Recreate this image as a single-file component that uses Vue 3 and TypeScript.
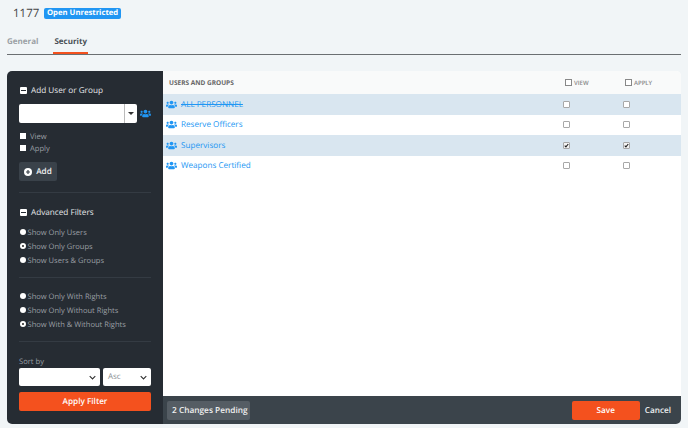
<script setup lang="ts">
interface Row { name: string; view: boolean; apply: boolean; tint: boolean; struck?: boolean }
const rows: Row[] = [
  { name: 'ALL PERSONNEL', view: false, apply: false, tint: true, struck: true },
  { name: 'Reserve Officers', view: false, apply: false, tint: false },
  { name: 'Supervisors', view: true, apply: true, tint: true },
  { name: 'Weapons Certified', view: false, apply: false, tint: false },
]
const radiosA = [
  { label: 'Show Only Users', on: false },
  { label: 'Show Only Groups', on: true },
  { label: 'Show Users & Groups', on: false },
]
const radiosB = [
  { label: 'Show Only With Rights', on: false },
  { label: 'Show Only Without Rights', on: false },
  { label: 'Show With & Without Rights', on: true },
]
const groupPath = 'M96 224c35.3 0 64-28.7 64-64s-28.7-64-64-64-64 28.7-64 64 28.7 64 64 64zm448 0c35.3 0 64-28.7 64-64s-28.7-64-64-64-64 28.7-64 64 28.7 64 64 64zm32 32h-64c-17.6 0-33.5 7.1-45.1 18.6 40.3 22.1 68.9 62 75.1 109.4h66c17.7 0 32-14.3 32-32v-32c0-35.3-28.7-64-64-64zm-256 0c61.9 0 112-50.1 112-112S381.9 32 320 32 208 82.1 208 144s50.1 112 112 112zm76.8 32h-8.3c-20.8 10-43.9 16-68.5 16s-47.6-6-68.5-16h-8.3C179.6 288 128 339.6 128 403.2V432c0 26.5 21.5 48 48 48h288c26.5 0 48-21.5 48-48v-28.8c0-63.6-51.6-115.2-115.2-115.2zm-223.7-13.4C161.5 263.1 145.6 256 128 256H64c-35.3 0-64 28.7-64 64v32c0 17.7 14.3 32 32 32h65.9c6.3-47.4 34.9-87.3 75.2-109.4z'
</script>

<template>
  <div class="page">
    <div class="title">
      <span class="num">1177</span>
      <span class="badge">Open Unrestricted</span>
    </div>
    <div class="tabs">
      <span class="tab">General</span>
      <span class="tab active">Security</span>
    </div>
    <div class="shell">
      <aside class="side">
        <div class="head">
          <span class="minus"></span>
          <span>Add User or Group</span>
        </div>
        <div class="pick">
          <div class="combo">
            <span class="combo-arrow"></span>
          </div>
          <svg class="gicon" viewBox="0 0 640 512"><path :d="groupPath" /></svg>
        </div>
        <label class="check first"><span class="box"></span><span class="lbl">View</span></label>
        <label class="check"><span class="box"></span><span class="lbl">Apply</span></label>
        <button class="add">
          <svg class="plus" viewBox="0 0 12 12">
            <circle cx="6" cy="6" r="6" fill="#fff" />
            <path d="M6 3v6M3 6h6" stroke="#3a424a" stroke-width="1.8" />
          </svg>
          Add
        </button>
        <hr class="rule r1" />
        <div class="head h2">
          <span class="minus"></span>
          <span>Advanced Filters</span>
        </div>
        <div class="radios">
          <div v-for="r in radiosA" :key="r.label" class="radio">
            <span class="dot" :class="{ on: r.on }"></span><span class="lbl">{{ r.label }}</span>
          </div>
        </div>
        <hr class="rule r2" />
        <div class="radios second">
          <div v-for="r in radiosB" :key="r.label" class="radio">
            <span class="dot" :class="{ on: r.on }"></span><span class="lbl">{{ r.label }}</span>
          </div>
        </div>
        <hr class="rule r3" />
        <div class="sort-label">Sort by</div>
        <div class="sort">
          <div class="sel wide"><svg class="chev" viewBox="0 0 10 6"><path d="M1 1l4 4 4-4" /></svg></div>
          <div class="sel narrow">Asc<svg class="chev" viewBox="0 0 10 6"><path d="M1 1l4 4 4-4" /></svg></div>
        </div>
        <button class="apply">Apply Filter</button>
      </aside>
      <main class="main">
        <div class="thead">
          <span class="th-name">USERS AND GROUPS</span>
          <span class="th-col"><span class="hbox"></span>VIEW</span>
          <span class="th-col"><span class="hbox"></span>APPLY</span>
        </div>
        <div class="list">
          <div v-for="r in rows" :key="r.name" class="row" :class="{ tint: r.tint }">
            <svg class="ricon" viewBox="0 0 640 512"><path :d="groupPath" /></svg>
            <span class="rname" :class="{ struck: r.struck }">{{ r.name }}</span>
            <span class="cell"><span class="cb" :class="{ checked: r.view }"><svg v-if="r.view" viewBox="0 0 8 8"><path d="M1.2 4.2l1.9 2 3.7-4.6" /></svg></span></span>
            <span class="cell"><span class="cb" :class="{ checked: r.apply }"><svg v-if="r.apply" viewBox="0 0 8 8"><path d="M1.2 4.2l1.9 2 3.7-4.6" /></svg></span></span>
          </div>
        </div>
        <div class="foot">
          <span class="pending">2 Changes Pending</span>
          <button class="save">Save</button>
          <span class="cancel">Cancel</span>
        </div>
      </main>
    </div>
  </div>
</template>

<style>
html, body { margin: 0; background: #f1f5f7; }
</style>

<style scoped>
.page { width: 688px; height: 428px; box-sizing: border-box; padding: 0 7px; background: #f1f5f7; font-family: "Open Sans", sans-serif; overflow: hidden; text-rendering: geometricPrecision; }
.page button { text-rendering: geometricPrecision; }
.title { display: flex; align-items: center; height: 27px; padding-left: 6px; }
.num { font-size: 11.5px; color: #444; width: 31px; }
.badge { background: #2196f3; color: #fff; font-size: 7.7px; font-weight: 700; height: 11px; line-height: 11px; padding: 0 3px; border-radius: 2px; white-space: nowrap; }
.tabs { display: flex; height: 27px; border-bottom: 1px solid #6b6f72; gap: 16px; margin-bottom: 16px; box-sizing: content-box; }
.tab { font-size: 8px; font-weight: 700; color: #9ba1a5; line-height: 30px; height: 27px; box-sizing: border-box; }
.tab.active { color: #4a5056; border-bottom: 2px solid #f4511e; padding: 0 1px; margin-left: -1px; }
.shell { display: flex; height: 353px; border-radius: 5px; overflow: hidden; }
.side { width: 156px; flex: none; background: #262c33; box-sizing: border-box; padding: 13px 12px 0; color: #fff; display: flex; flex-direction: column; }
.head { display: flex; align-items: center; gap: 4px; font-size: 8.2px; line-height: 13px; color: #e4e6e8; height: 12px; }
.minus { width: 7px; height: 7px; background: #fff; border-radius: 1px; margin-left: 1px; position: relative; flex: none; }
.minus::after { content: ""; position: absolute; left: 1px; right: 1px; top: 3px; height: 1px; background: #262c33; }
.pick { display: flex; align-items: center; margin-top: 8px; gap: 3px; }
.combo { width: 119px; height: 19px; background: #fff; border-radius: 2px; position: relative; }
.combo-arrow { position: absolute; right: 0; top: 0; bottom: 0; width: 12px; border-left: 1px solid #bbb; }
.combo-arrow::after { content: ""; position: absolute; left: 3px; top: 8px; border-style: solid; border-width: 3px 3px 0; border-color: #333 transparent transparent; }
.gicon { width: 11px; height: 9px; fill: #2196f3; }
.check { display: flex; align-items: center; font-size: 7.6px; color: #9a9fa4; height: 12px; gap: 4px; padding-left: 1px; }
.check.first { margin-top: 7px; }
.lbl { padding-top: 1px; }
.box { width: 6px; height: 6px; background: #fff; }
.add { width: 38px; height: 19px; margin-top: 8px; background: #3a424a; color: #f0f0f0; border: 0; border-radius: 2px; font: 600 8.2px "Open Sans", sans-serif; display: flex; align-items: center; justify-content: center; gap: 4px; padding: 0; }
.plus { width: 8px; height: 8px; }
.rule { width: 100%; border: 0; height: 1px; background: #343b43; margin: 0; flex: none; }
.r1 { margin-top: 11px; }
.h2 { margin-top: 13px; }
.radios { margin-top: 7px; display: flex; flex-direction: column; }
.radios.second { margin-top: 11px; }
.radio { display: flex; align-items: center; height: 14px; font-size: 7.55px; color: #9a9fa4; white-space: nowrap; }
.dot { width: 6px; height: 6px; border-radius: 50%; background: #fff; margin-right: 1.5px; margin-left: 1px; flex: none; margin-top: -1px; box-sizing: border-box; }
.dot.on { border: 2px solid #fff; background: #222; }
.r2 { margin-top: 10px; }
.r3 { margin-top: 10px; }
.sort-label { margin-top: 14px; font-size: 7.6px; color: #9a9fa4; height: 12px; line-height: 12px; }
.sort { display: flex; gap: 3px; }
.sel { height: 18px; background: #fff; border-radius: 2px; box-sizing: border-box; position: relative; font-size: 8px; color: #8a8f94; line-height: 18px; padding-left: 5px; }
.wide { width: 81px; }
.narrow { width: 48px; }
.chev { position: absolute; right: 4px; top: 7px; width: 7px; height: 5px; fill: none; stroke: #333; stroke-width: 1.6; }
.apply { width: 132px; height: 19px; margin-top: 6px; background: #f4511e; color: #fff; border: 0; border-radius: 2px; font: 600 8.2px "Open Sans", sans-serif; padding: 0; }
.main { flex: 1; min-width: 0; display: flex; flex-direction: column; background: #fff; }
.thead { height: 23px; display: flex; align-items: center; background: #f9fafa; padding-left: 6px; font-size: 6.5px; font-weight: 600; color: #666; box-sizing: border-box; }
.th-name { width: 396px; flex: none; font-weight: 700; }
.th-col { width: 60px; flex: none; display: flex; align-items: center; gap: 2px; font-size: 6px; color: #888; }
.hbox { width: 7px; height: 7px; border: 1px solid #888; background: #fff; box-sizing: border-box; }
.list { flex: 1; }
.row { height: 20.5px; display: flex; align-items: center; padding-left: 3px; }
.row.tint { background: #d9e6f0; }
.ricon { width: 11px; height: 9px; fill: #2196f3; flex: none; }
.rname { font-size: 8.15px; color: #2196f3; margin-left: 4px; width: 380px; white-space: nowrap; flex: none; }
.struck { text-decoration: line-through; }
.cell { width: 60px; flex: none; display: flex; padding-left: 2px; box-sizing: border-box; }
.cb { width: 7px; height: 7px; background: #fff; border: 1px solid #a8a8a8; border-radius: 1px; display: block; box-sizing: border-box; }
.cb svg { display: block; width: 5px; height: 5px; fill: none; stroke: #222; stroke-width: 1.8; }
.cb.checked { background: #f3f3f3; }
.foot { height: 28px; background: #3b444b; display: flex; align-items: center; padding-left: 4px; box-sizing: border-box; }
.pending { background: #555d64; color: #f0f0f0; font-size: 8.3px; font-weight: 600; height: 19px; line-height: 19px; padding: 0 5px; border-radius: 2px; width: 73px; white-space: nowrap; }
.save { margin-left: auto; width: 68px; height: 19px; background: #f4511e; border: 0; color: #fff; font: 600 8.2px "Open Sans", sans-serif; padding: 0; border-radius: 2px; }
.cancel { color: #eceeef; font-size: 8.2px; font-weight: 600; margin: 0 10px 0 5px; }
</style>
